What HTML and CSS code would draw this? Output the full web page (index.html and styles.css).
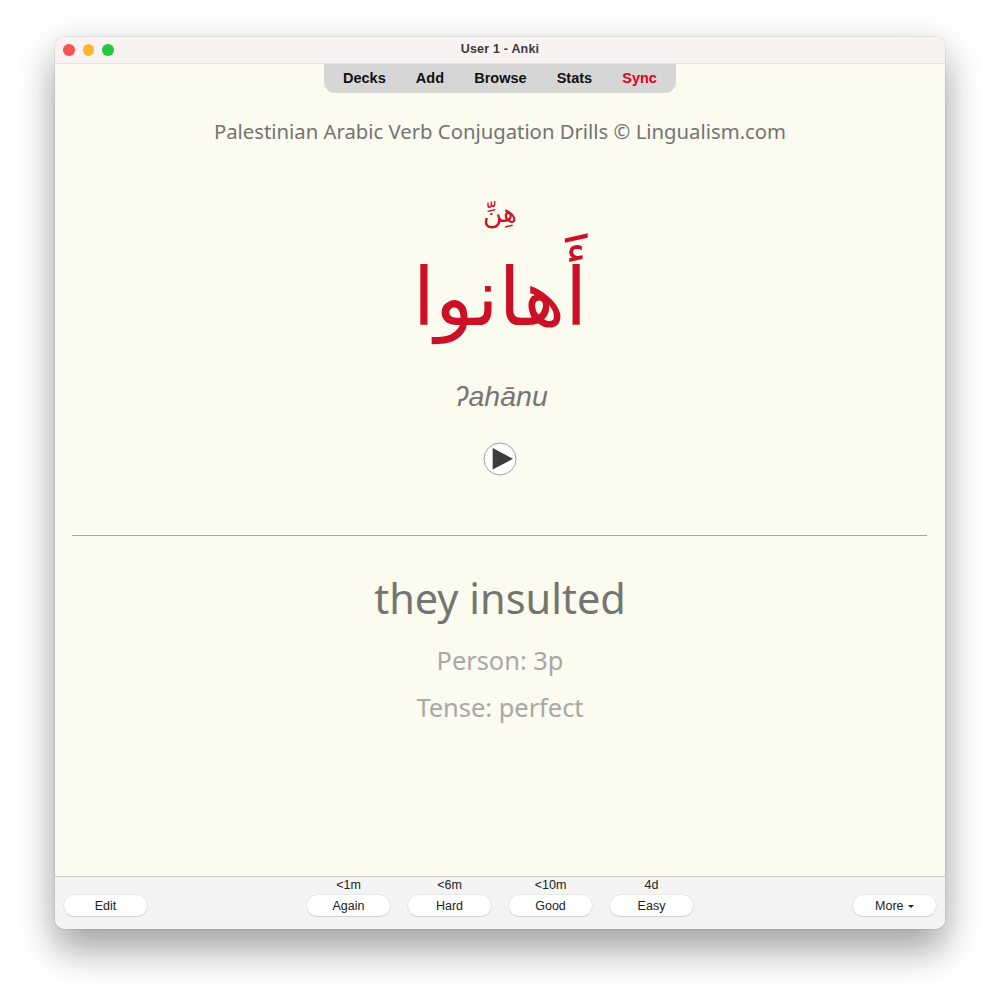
FILE: index.html
```html
<!DOCTYPE html>
<html lang="en">
<head>
<meta charset="utf-8">
<title>User 1 - Anki</title>
<link rel="stylesheet" href="styles.css">
</head>
<body>
<div class="window">
  <header class="titlebar">
    <div class="lights"><span class="light red"></span><span class="light amber"></span><span class="light green"></span></div>
    <div class="title">User 1 - Anki</div>
  </header>
  <main class="content">
    <nav class="toolbar">
      <span>Decks</span><span>Add</span><span>Browse</span><span>Stats</span><span class="sync">Sync</span>
    </nav>
    <p class="credit">Palestinian Arabic Verb Conjugation Drills © Lingualism.com</p>
    <p class="pronoun" lang="ar" dir="rtl">هِنِّ</p>
    <p class="word" lang="ar" dir="rtl">أَهانوا</p>
    <p class="translit">ʔahānu</p>
    <div class="play-row">
      <svg class="play" width="34" height="34" viewBox="0 0 34 34" aria-hidden="true">
        <circle cx="17" cy="17" r="16" fill="#fff" stroke="#a0a0a0" stroke-width="1"/>
        <path d="M9.7 6 L30 16.8 L9.7 27.5 Z" fill="#3c3c3c"/>
      </svg>
    </div>
    <hr class="rule">
    <p class="meaning">they insulted</p>
    <p class="meta">Person: 3p</p>
    <p class="meta">Tense: perfect</p>
  </main>
  <footer class="bottombar">
    <div class="side"><button class="btn">Edit</button></div>
    <div class="answers">
      <div class="answer"><span class="due">&lt;1m</span><button class="btn">Again</button></div>
      <div class="answer"><span class="due">&lt;6m</span><button class="btn">Hard</button></div>
      <div class="answer"><span class="due">&lt;10m</span><button class="btn">Good</button></div>
      <div class="answer"><span class="due">4d</span><button class="btn">Easy</button></div>
    </div>
    <div class="side right"><button class="btn">More <span class="caret"></span></button></div>
  </footer>
</div>
</body>
</html>
```
FILE: styles.css
```css
* { box-sizing: border-box; }
html, body { margin: 0; background: #fff; }
body { padding: 37px 55px 71px; height: 1000px; overflow: hidden; font-family: "Liberation Sans", Arial, sans-serif; }
.window {
  width: 890px; height: 892px; display: flex; flex-direction: column;
  border-radius: 10px; overflow: hidden;
  box-shadow: 0 0 0 1px rgba(0,0,0,.06), 0 24px 36px rgba(0,0,0,.28), 0 6px 40px rgba(0,0,0,.14);
}
.titlebar {
  height: 27px; flex: none; background: #f9f2f2; border-bottom: 1px solid #e5e0dc; padding-bottom: 3px;
  display: flex; align-items: center; justify-content: center; position: relative;
}
.lights { position: absolute; left: 8px; top: 7px; display: flex; gap: 8px; }
.light { width: 11.5px; height: 11.5px; border-radius: 50%; }
.red { background: #f8544f; }
.amber { background: #fdb62e; }
.green { background: #28c73f; }
.title { font-size: 12.5px; font-weight: 700; color: #3a3a3a; letter-spacing: .2px; }
.content {
  flex: 1; min-height: 0; background: #fbfbef; display: flex; flex-direction: column; align-items: center;
}
.content p { margin: 0; }
.toolbar {
  width: 352px; height: 29px; flex: none; background: #d6d6d6; border-radius: 0 0 11px 11px;
  display: flex; justify-content: space-between; align-items: center; padding: 0 19px 2px;
  font-size: 14.5px; font-weight: 700; color: #111;
}
.sync { color: #e0001b; }
.content .credit { margin-top: 24px; font-family: "Noto Sans", sans-serif; font-size: 20.3px; line-height: 28px; color: #747470; }
.content .pronoun { margin-top: 50px; font-family: "DejaVu Sans", sans-serif; font-size: 26.5px; line-height: 36px; color: #cc1126; }
.content .word { margin-top: 7px; font-family: "DejaVu Sans", sans-serif; font-size: 80px; line-height: 120px; color: #cc1126; }
.content .translit { margin-top: 21px; padding-left: 2px; font-style: italic; font-size: 28.5px; line-height: 34px; color: #757575; }
.play-row { margin-top: 29px; height: 34px; }
.play { display: block; }
.rule { width: 855px; margin: 59px 2px 0 0; border: 0; border-top: 1px solid #a9a9a2; }
.content .meaning { margin-top: 34px; font-family: "Noto Sans", sans-serif; font-size: 41.5px; line-height: 56px; color: #757570; }
.content .meta { font-family: "Noto Sans", sans-serif; font-size: 25.4px; line-height: 47px; color: #a8a8a4; }
.content .meaning + .meta { margin-top: 11px; }
.bottombar {
  height: 53px; flex: none; background: #f4f4f4; border-top: 1px solid #c9c9c4;
  display: flex; justify-content: space-between; padding: 0 9px;
}
.side { width: 83px; display: flex; align-items: flex-end; padding-bottom: 13px; }
.answers { display: flex; gap: 18px; }
.answer { width: 83px; display: flex; flex-direction: column; align-items: center; }
.due { font-size: 12.5px; line-height: 16px; color: #222; }
.btn {
  width: 83px; height: 21px; padding: 0; border: 0; border-radius: 11px; background: #fff;
  box-shadow: 0 0 0 .5px #e0e0e0, 0 1px 1px rgba(0,0,0,.2);
  font: 12.5px "Liberation Sans", Arial, sans-serif; color: #222;
}
.answer .btn { margin-top: 2px; }
.caret { display: inline-block; width: 0; height: 0; border: 3.5px solid transparent; border-top-color: #222; border-bottom: 0; vertical-align: 2px; margin-left: 1px; }
```
